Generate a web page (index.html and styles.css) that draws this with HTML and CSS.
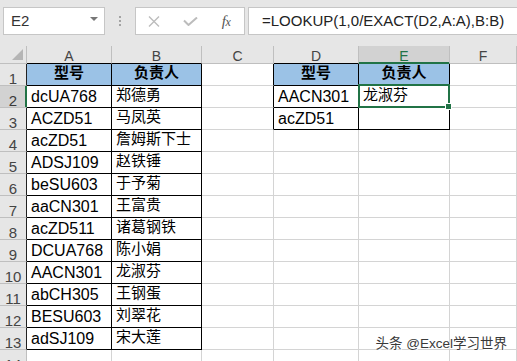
FILE: index.html
```html
<!DOCTYPE html>
<html lang="zh-CN">
<head>
<meta charset="utf-8">
<title>Excel LOOKUP EXACT</title>
<link rel="stylesheet" href="styles.css">
</head>
<body>
<div class="toolbar">
  <div class="namebox"><span class="nb-text">E2</span><span class="nb-arrow"></span></div>
  <div class="dots"><i></i><i></i><i></i></div>
  <div class="fbtns">
    <span class="fbtn">
      <svg width="12" height="11" viewBox="0 0 12 11"><path d="M1 0.5L11 10.5M11 0.5L1 10.5" stroke="#bcbcbc" stroke-width="1.4" fill="none"/></svg>
    </span>
    <span class="fbtn">
      <svg width="15" height="9" viewBox="0 0 15 9"><path d="M1 3.5L5.5 8L14 0.5" stroke="#bcbcbc" stroke-width="2" fill="none"/></svg>
    </span>
    <span class="fbtn fx">f<span class="fx-x">x</span></span>
  </div>
  <div class="formula">=LOOKUP(1,0/EXACT(D2,A:A),B:B)</div>
</div>

<div class="sheet">
  <div class="corner"><span class="tri"></span></div>
  <div class="ch edge">A</div>
  <div class="ch edge">B</div>
  <div class="ch">C</div>
  <div class="ch edge">D</div>
  <div class="ch sel-col">E</div>
  <div class="ch">F</div>

  <div class="rh edge">1</div>
  <div class="c tb th zh">型号</div>
  <div class="c tb th zh">负责人</div>
  <div class="c redge"></div>
  <div class="c tb th zh">型号</div>
  <div class="c tb th zh">负责人</div>
  <div class="c"></div>

  <div class="rh edge sel-row">2</div>
  <div class="c tb">dcUA768</div>
  <div class="c tb zh">郑德勇</div>
  <div class="c redge"></div>
  <div class="c tb">AACN301</div>
  <div class="c tb zh sel">龙淑芬</div>
  <div class="c"></div>

  <div class="rh edge">3</div>
  <div class="c tb">ACZD51</div>
  <div class="c tb zh">马凤英</div>
  <div class="c redge"></div>
  <div class="c tb">acZD51</div>
  <div class="c tb"></div>
  <div class="c"></div>

  <div class="rh edge">4</div>
  <div class="c tb">acZD51</div>
  <div class="c tb zh">詹姆斯下士</div>
  <div class="c"></div><div class="c"></div><div class="c"></div><div class="c"></div>

  <div class="rh edge">5</div>
  <div class="c tb">ADSJ109</div>
  <div class="c tb zh">赵铁锤</div>
  <div class="c"></div><div class="c"></div><div class="c"></div><div class="c"></div>

  <div class="rh edge">6</div>
  <div class="c tb">beSU603</div>
  <div class="c tb zh">于予菊</div>
  <div class="c"></div><div class="c"></div><div class="c"></div><div class="c"></div>

  <div class="rh edge">7</div>
  <div class="c tb">aaCN301</div>
  <div class="c tb zh">王富贵</div>
  <div class="c"></div><div class="c"></div><div class="c"></div><div class="c"></div>

  <div class="rh edge">8</div>
  <div class="c tb">acZD511</div>
  <div class="c tb zh">诸葛钢铁</div>
  <div class="c"></div><div class="c"></div><div class="c"></div><div class="c"></div>

  <div class="rh edge">9</div>
  <div class="c tb">DCUA768</div>
  <div class="c tb zh">陈小娟</div>
  <div class="c"></div><div class="c"></div><div class="c"></div><div class="c"></div>

  <div class="rh edge">10</div>
  <div class="c tb">AACN301</div>
  <div class="c tb zh">龙淑芬</div>
  <div class="c"></div><div class="c"></div><div class="c"></div><div class="c"></div>

  <div class="rh edge">11</div>
  <div class="c tb">abCH305</div>
  <div class="c tb zh">王钢蛋</div>
  <div class="c"></div><div class="c"></div><div class="c"></div><div class="c"></div>

  <div class="rh edge">12</div>
  <div class="c tb">BESU603</div>
  <div class="c tb zh">刘翠花</div>
  <div class="c"></div><div class="c"></div><div class="c"></div><div class="c"></div>

  <div class="rh edge">13</div>
  <div class="c tb">adSJ109</div>
  <div class="c tb zh">宋大莲</div>
  <div class="c"></div><div class="c"></div><div class="c"></div><div class="c"></div>

  <div class="rh">14</div>
  <div class="c"></div><div class="c"></div><div class="c"></div><div class="c"></div><div class="c"></div><div class="c"></div>
</div>

<div class="watermark">头条 @Excel学习世界</div>
</body>
</html>
```

FILE: styles.css
```css
html, body {
  margin: 0;
  padding: 0;
}
body {
  width: 517px;
  height: 361px;
  overflow: hidden;
  position: relative;
  background: #ffffff;
  font-family: "Liberation Sans", "Noto Sans CJK SC", sans-serif;
  color: #000;
}

/* ---------- toolbar ---------- */
.toolbar {
  height: 46px;
  box-sizing: border-box;
  padding-top: 7px;
  background: #e6e6e6;
  display: flex;
  align-items: flex-start;
}
.namebox {
  margin-left: 3px;
  width: 102px;
  height: 28px;
  box-sizing: border-box;
  border: 1px solid #c6c6c6;
  background: #fff;
  display: flex;
  align-items: center;
  justify-content: space-between;
  padding: 0 6px 0 7px;
}
.nb-text {
  font-size: 15px;
  line-height: 26px;
  color: #333;
}
.nb-arrow {
  width: 0;
  height: 0;
  border-left: 4px solid transparent;
  border-right: 4px solid transparent;
  border-top: 4px solid #777;
  margin-top: -4px;
}
.dots {
  width: 30px;
  height: 28px;
  display: flex;
  flex-direction: column;
  align-items: center;
  justify-content: center;
  gap: 2px;
}
.dots i {
  display: block;
  width: 2px;
  height: 2px;
  background: #a3a3a3;
}
.fbtns {
  width: 110px;
  height: 28px;
  box-sizing: border-box;
  border: 1px solid #c6c6c6;
  background: #fff;
  display: flex;
  margin-right: 3px;
}
.fbtn {
  flex: 1;
  display: flex;
  align-items: center;
  justify-content: center;
}
.fbtn svg {
  display: block;
}
.fx {
  font-family: "Liberation Serif", serif;
  font-style: italic;
  font-size: 15px;
  color: #555;
  letter-spacing: -0.5px;
}
.fx-x {
  font-size: 12px;
  position: relative;
  top: 1px;
}
.formula {
  flex: 1;
  height: 28px;
  box-sizing: border-box;
  border: 1px solid #c6c6c6;
  border-right: none;
  background: #fff;
  padding-left: 13px;
  font-size: 15px;
  line-height: 26px;
  color: #222;
  white-space: nowrap;
}

/* ---------- sheet ---------- */
.sheet {
  display: grid;
  grid-template-columns: 27px 85px 90px 72px 85px 91px 1fr;
  grid-template-rows: 18px;
  grid-auto-rows: 22px;
}
.sheet > div {
  box-sizing: border-box;
  border-right: 1px solid #d4d4d4;
  border-bottom: 1px solid #d4d4d4;
  display: flex;
  align-items: flex-end;
  min-width: 0;
  white-space: nowrap;
  overflow: visible;
}
.corner {
  background: #e6e6e6;
  border-color: #bfbfbf !important;
  position: relative;
}
.tri {
  position: absolute;
  left: 12px;
  top: 3px;
  width: 11px;
  height: 11px;
  background: #b5b5b5;
  clip-path: polygon(100% 0, 100% 100%, 0 100%);
}
.ch {
  background: #e6e6e6;
  border-right-color: #bfbfbf !important;
  border-bottom-color: #bfbfbf !important;
  justify-content: center;
  font-size: 14px;
  line-height: 12px;
  padding-bottom: 1px;
  color: #444;
}
.ch.edge {
  border-bottom-color: #000 !important;
}
.ch.sel-col {
  background: #d2d2d2;
  color: #217346;
  border-bottom-color: #217346 !important;
  box-shadow: inset 0 -1px 0 #217346;
}
.rh {
  background: #e6e6e6;
  border-right-color: #bfbfbf !important;
  border-bottom-color: #bfbfbf !important;
  justify-content: center;
  font-size: 15px;
  line-height: 13px;
  padding-bottom: 0;
  color: #444;
}
.rh.edge {
  border-right-color: #222 !important;
}
.rh.sel-row {
  background: #d2d2d2;
  border-right-color: #217346 !important;
  box-shadow: inset -1px 0 0 #217346;
  color: #3a3a3a;
}
.c {
  font-size: 16px;
  line-height: 18px;
  padding: 0 4px 1px 4px;
  color: #000;
}
.c.zh {
  font-size: 15px;
  padding-bottom: 3px;
}
.c.tb {
  border-right-color: #000;
  border-bottom-color: #000;
}
.c.redge {
  border-right-color: #000;
}
.c.th {
  background: #9bc2e6;
  font-weight: bold;
  justify-content: center;
}
.c.sel {
  position: relative;
}
.c.sel::after {
  content: "";
  position: absolute;
  left: -1px;
  top: -2px;
  right: -1px;
  bottom: -1px;
  border: 2px solid #217346;
  pointer-events: none;
}
.c.sel::before {
  content: "";
  position: absolute;
  right: -3px;
  bottom: -3px;
  width: 5px;
  height: 5px;
  background: #217346;
  border: 1px solid #fff;
  z-index: 2;
}

/* ---------- watermark ---------- */
.watermark {
  position: absolute;
  right: 10px;
  bottom: 9px;
  font-size: 13.5px;
  line-height: 16px;
  color: #3a3a3a;
  text-shadow: 0 0 1px #fff, 0 0 2px #fff, 1px 1px 0 #fff;
}
```
